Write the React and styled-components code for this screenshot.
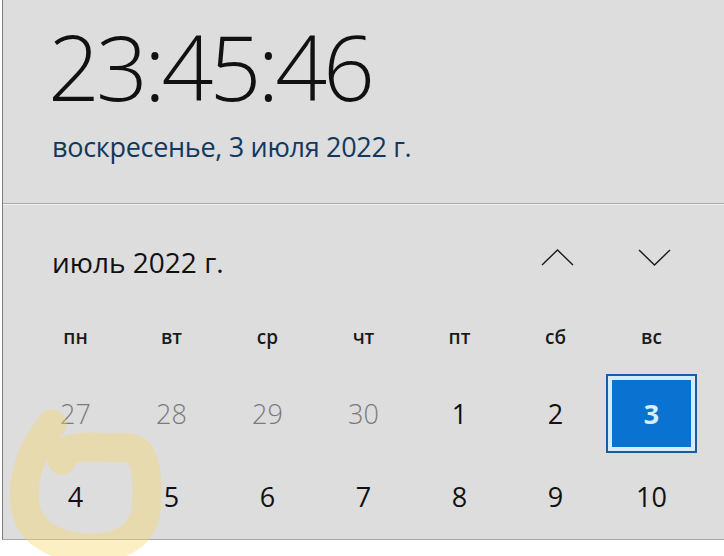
import React from 'react';
import styled, { createGlobalStyle } from 'styled-components';

const GlobalStyle = createGlobalStyle`
  html, body {
    margin: 0;
    padding: 0;
    background: #ffffff;
  }
  body {
    min-height: 556px;
    font-family: "Open Sans", "Noto Sans", sans-serif;
    color: #111;
  }
`;

const weekDays = ['пн', 'вт', 'ср', 'чт', 'пт', 'сб', 'вс'];

const days = [
  { n: 27, muted: true },
  { n: 28, muted: true },
  { n: 29, muted: true },
  { n: 30, muted: true },
  { n: 1 },
  { n: 2 },
  { n: 3, selected: true },
  { n: 4 },
  { n: 5 },
  { n: 6 },
  { n: 7 },
  { n: 8 },
  { n: 9 },
  { n: 10 },
];

const Chevron = ({ dir }) => (
  <svg width="33" height="17" viewBox="0 0 33 17">
    <polyline
      points={dir === 'up' ? '1,16 16.5,1 32,16' : '1,1 16.5,16 32,1'}
      fill="none"
      stroke="#1a1a1a"
      strokeWidth="1.4"
    />
  </svg>
);

const App = () => {
  return (
    <>
      <GlobalStyle />
      <Panel>
        <ClockSection>
          <Time>23:45:46</Time>
          <DateLink>воскресенье, 3 июля 2022 г.</DateLink>
        </ClockSection>
        <CalendarSection>
          <MonthHeader>
            <MonthTitle>июль 2022 г.</MonthTitle>
            <NavButtons>
              <NavButton aria-label="up">
                <Chevron dir="up" />
              </NavButton>
              <NavButton aria-label="down">
                <Chevron dir="down" />
              </NavButton>
            </NavButtons>
          </MonthHeader>
          <Grid>
            {weekDays.map((d) => (
              <WeekDay key={d}>{d}</WeekDay>
            ))}
            {days.map((d) => (
              <Day key={d.n} $muted={d.muted} $selected={d.selected}>
                {d.n}
              </Day>
            ))}
          </Grid>
        </CalendarSection>
        <Highlight width="180" height="156" viewBox="0 0 180 156">
          <path
            d="M62 60 C63 51 70 47 90 47 L130 48 C146 50 149 80 146 110 C143 136 120 148 90 148 C60 148 36 136 28 116 C20 96 24 58 52 24"
            fill="none"
            stroke="rgba(246, 216, 104, 0.4)"
            strokeWidth="29"
            strokeLinecap="round"
            strokeLinejoin="round"
          />
        </Highlight>
      </Panel>
    </>
  );
};

const Panel = styled.div`
  position: relative;
  margin-left: 2px;
  width: 722px;
  height: 540px;
  box-sizing: border-box;
  background: #dedddd;
  border-left: 1px solid #7d7d7d;
  border-bottom: 1px solid #a6a6a6;
  display: flex;
  flex-direction: column;
`;

const ClockSection = styled.div`
  height: 204px;
  box-sizing: border-box;
  padding: 22px 0 0 45px;
  border-bottom: 1px solid #a9a9a9;
  box-shadow: 0 1px 0 #f3f3f3;
`;

const Time = styled.div`
  font-family: "Open Sans", "Noto Sans", sans-serif;
  font-weight: 300;
  font-size: 91px;
  line-height: 88px;
  letter-spacing: -4px;
  color: #111;
`;

const DateLink = styled.div`
  margin-top: 22px;
  padding-left: 4px;
  font-size: 27px;
  line-height: 30px;
  letter-spacing: -0.3px;
  color: #12385e;
`;

const CalendarSection = styled.div`
  padding: 33px 0 0 27px;
`;

const MonthHeader = styled.div`
  display: flex;
  align-items: center;
  justify-content: space-between;
  height: 50px;
  padding-left: 22px;
  padding-right: 53px;
`;

const MonthTitle = styled.div`
  font-size: 28px;
  color: #111;
`;

const NavButtons = styled.div`
  display: flex;
  gap: 64px;
  padding-bottom: 10px;
`;

const NavButton = styled.button`
  display: flex;
  padding: 0;
  border: none;
  background: transparent;
  cursor: pointer;
`;

const Grid = styled.div`
  display: grid;
  grid-template-columns: repeat(7, 91px);
  grid-template-rows: 56px 79px 79px;
  column-gap: 5px;
  row-gap: 4px;
  margin-top: 27px;
`;

const WeekDay = styled.div`
  display: flex;
  align-items: center;
  justify-content: center;
  font-size: 19px;
  font-weight: 600;
  color: #1a1a1a;
  padding-bottom: 10px;
`;

const Day = styled.div`
  display: flex;
  align-items: center;
  justify-content: center;
  box-sizing: border-box;
  font-size: 27px;
  font-weight: ${(p) => (p.$selected ? 700 : p.$muted ? 300 : 400)};
  color: ${(p) => (p.$selected ? '#d6efff' : p.$muted ? '#7a7a7a' : '#111')};
  background: ${(p) => (p.$selected ? '#0a72d0' : 'transparent')};
  border: ${(p) => (p.$selected ? '2px solid #1a5c9e' : 'none')};
  box-shadow: ${(p) => (p.$selected ? 'inset 0 0 0 4px #d4ecfb' : 'none')};
`;

const Highlight = styled.svg`
  position: absolute;
  left: -3px;
  top: 400px;
  pointer-events: none;
`;

export default App;
